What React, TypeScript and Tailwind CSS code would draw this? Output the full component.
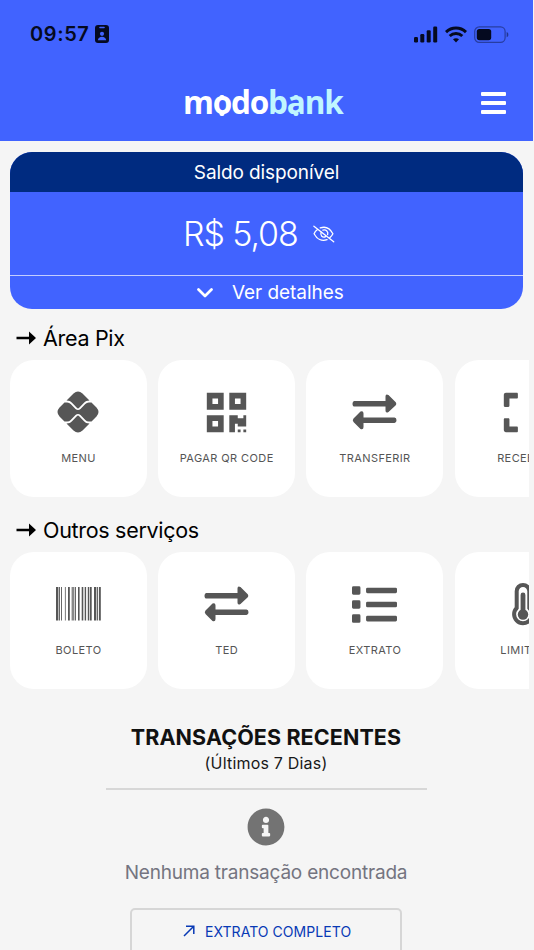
/** Mobile banking home screen. */

import type { ReactNode } from 'react';
import { FaExpand, FaInfoCircle, FaList, FaQrcode } from 'react-icons/fa';

function StatusBar() {
  return (
    <div className="flex h-[68px] items-center justify-between pr-[24px] pl-[30px]">
      <div className="flex items-center gap-[6px]">
        <span className="w-[59px] text-[20px] font-semibold tracking-[0.6px] whitespace-nowrap text-[#050a20]">09:57</span>
        <svg width="14" height="18" viewBox="0 0 14 18">
          <rect width="14" height="18" rx="3" fill="#050a20" />
          <rect x="4.2" y="1.8" width="5.6" height="1.5" rx=".7" fill="#4163ff" />
          <circle cx="7" cy="8.8" r="2.1" fill="#4163ff" />
          <path d="M2.8 15.2c.3-2.3 2-3.5 4.2-3.5s3.9 1.2 4.2 3.5z" fill="#4163ff" />
        </svg>
      </div>
      <div className="flex items-center gap-[7px]">
        <svg width="24" height="17" viewBox="0 0 24 17" fill="#050a20">
          <rect x="0" y="11" width="4" height="5.5" rx="1.2" />
          <rect x="6.3" y="8" width="4" height="8.5" rx="1.2" />
          <rect x="12.7" y="4.2" width="4" height="12.3" rx="1.2" />
          <rect x="19.2" y="0.5" width="4" height="16" rx="1.2" />
        </svg>
        <svg width="22" height="17" viewBox="0 0 22 17" fill="none" stroke="#050a20" strokeWidth="3">
          <path d="M1 6.1C6.7.7 15.3.7 21 6.1" />
          <path d="M4.7 10C8.3 6.7 13.7 6.7 17.3 10" />
          <path d="M11 16.5l-3-3.2c1.7-1.5 4.3-1.5 6 0z" fill="#050a20" stroke="none" />
        </svg>
        <svg width="35" height="17" viewBox="0 0 35 17">
          <rect x=".7" y=".9" width="30.4" height="15.4" rx="4.6" fill="none" stroke="#050a20" strokeOpacity=".42" strokeWidth="1.2" />
          <rect x="2.8" y="3" width="14.4" height="11.2" rx="2.6" fill="#050a20" />
          <path d="M32.7 6v5.3c2.2-.9 2.2-4.4 0-5.3z" fill="#050a20" fillOpacity=".5" />
        </svg>
      </div>
    </div>
  );
}

function LogoLetter({ children, nub }: { children: ReactNode; nub: string }) {
  return (
    <span className="relative">
      {children}
      <span className={`absolute top-[15px] left-1/2 h-[3px] w-[5px] -translate-x-1/2 rounded-t-[2px] ${nub}`} />
      <span className={`absolute bottom-[7px] left-1/2 h-[3px] w-[5px] -translate-x-1/2 rounded-b-[2px] ${nub}`} />
    </span>
  );
}

function Header() {
  return (
    <header className="mr-px h-[141px] bg-[#4163ff]">
      <StatusBar />
      <div className="flex h-[69px] items-center justify-between pr-[27px]">
        <div className="w-[45px]" />
        <div className="w-[160px] pb-[1px] font-['Open_Sans',sans-serif] text-[31.5px] leading-[44px] font-bold tracking-[-1.2px] whitespace-nowrap text-white">
          m<LogoLetter nub="bg-white">o</LogoLetter>do
          <span className="text-[#c0f6ff]">
            b<LogoLetter nub="bg-[#c0f6ff]">a</LogoLetter>nk
          </span>
        </div>
        <div className="flex w-[25px] flex-col gap-[5px]">
          <div className="h-[4px] rounded-[1px] bg-white" />
          <div className="h-[4px] rounded-[1px] bg-white" />
          <div className="h-[4px] rounded-[1px] bg-white" />
        </div>
      </div>
    </header>
  );
}

function BalanceCard() {
  return (
    <section className="mt-[11px] mr-[11px] ml-[10px] overflow-hidden rounded-[22px] bg-[#4163ff] text-white">
      <div className="flex h-[40px] items-center justify-center bg-[#002b80] pt-[2px] text-[19px] tracking-[-0.1px]">
        Saldo disponível
      </div>
      <div className="flex h-[83px] items-center pl-[173px]">
        <span className="w-[130px] text-[34px] font-light tracking-[-1.1px] whitespace-nowrap">R$ 5,08</span>
        <svg width="22" height="18" viewBox="0 0 22 18" fill="none" stroke="white" strokeWidth="1.3" strokeLinecap="round">
          <path d="M.9 1.2l19.8 15.6M7.2 2.9c5.3-1.8 10 .7 12.7 5.9-.7 1.4-1.7 2.7-2.9 3.7M4.2 4.7C2.8 5.7 1.8 7.1 1.1 8.8c2.7 5.3 7.7 7.7 13 5.8" />
          <path d="M8.2 7.1c-1.4 3.5 1.3 6 4.5 4.6M9.9 5.2c3.2-1 5.7 1.5 4.7 4.5" />
        </svg>
      </div>
      <div className="flex h-[34px] items-center border-t border-[#c3cdff] pl-[187px] text-[19px]">
        <svg width="16" height="10" viewBox="0 0 16 10" fill="none" stroke="white" strokeWidth="2.7" strokeLinecap="round" strokeLinejoin="round">
          <path d="M1.5 1.5L8 8l6.5-6.5" />
        </svg>
        <span className="ml-[19px] pt-[2px] tracking-[-0.06px]">Ver detalhes</span>
      </div>
    </section>
  );
}

function PixIcon() {
  return (
    <svg className="-ml-[2px]" width="42" height="42" viewBox="0 0 42 42" fill="#565656">
      <path d="M9.5 9.5L16.5 2.5Q21-1.5 25.5 2.5L32.5 9.5C29.8 9.6 28.5 10.2 27 11.7L22.2 16.8Q21 18 19.8 16.8L15 11.7C13.5 10.2 12.2 9.6 9.5 9.5Z" />
      <path d="M9.5 32.5L16.5 39.5Q21 43.5 25.5 39.5L32.5 32.5C29.8 32.4 28.5 31.8 27 30.3L22.2 25.2Q21 24 19.8 25.2L15 30.3C13.5 31.8 12.2 32.4 9.5 32.5Z" />
      <path d="M7.5 11.5H10.2Q12.2 11.5 13.7 13L18.5 18Q21 20.2 23.5 18L28.3 13Q29.8 11.5 31.8 11.5H34.5L39.5 16.5Q43.5 21 39.5 25.5L34.5 30.5H31.8Q29.8 30.5 28.3 29L23.5 24Q21 21.8 18.5 24L13.7 29Q12.2 30.5 10.2 30.5H7.5L2.5 25.5Q-1.5 21 2.5 16.5Z" />
    </svg>
  );
}

function TransferIcon() {
  return (
    <svg width="45" height="36" viewBox="0 0 45 36" fill="#565656">
      <path d="M2.5 7H33.5V2.5Q33.5-.5 36.5 1L43.5 8Q45 9.7 43.5 11.5L36.5 18Q33.5 19.5 33.5 16.5V12.5H2.5Q.5 12.5.5 9.7T2.5 7Z" />
      <path d="M42.5 23.5H11.5V19.5Q11.5 16.5 8.5 17.5L1.5 24.5Q0 26.3 1.5 28L8.5 35Q11.5 36 11.5 33V29H42.5Q44.5 29 44.5 26.3T42.5 23.5Z" />
    </svg>
  );
}

const bars = [
  [0, 2], [2.6, 1.3], [5.1, 0.9], [8.9, 0.8], [12, 1.8], [15.7, 1], [17.3, 1], [19, 0.9],
  [22, 1.6], [25.7, 1.6], [28.7, 1.4], [31.8, 1.5], [34, 1.7], [38, 2.1], [40.7, 1.2], [42.9, 1.9],
];

function BarcodeIcon() {
  return (
    <svg width="45" height="34" viewBox="0 0 45 34" fill="#565656">
      {bars.map(([x, width]) => (
        <rect key={x} x={x} y="0" width={width} height="33.5" />
      ))}
    </svg>
  );
}

function ThermometerIcon() {
  return (
    <svg width="22" height="44" viewBox="0 0 22 44" fill="none">
      <path d="M4.7 9.2a6.3 6.3 0 0 1 12.6 0v16.8a8.9 8.9 0 1 1-12.6 0z" stroke="#565656" strokeWidth="4" />
      <path d="M11 13v20" stroke="#565656" strokeWidth="4.8" strokeLinecap="round" />
      <circle cx="11" cy="32.5" r="5.2" fill="#565656" />
    </svg>
  );
}

function Tile({ icon, label }: { icon: ReactNode; label: string }) {
  return (
    <button className="flex h-[137px] w-[137px] shrink-0 flex-col items-center rounded-[24px] bg-white pt-[27px]">
      <span className="flex h-[50px] items-center text-[#565656]">{icon}</span>
      <span className="mt-[13px] text-[11px] leading-[17px] tracking-[0.4px] whitespace-nowrap text-[#555]">{label}</span>
    </button>
  );
}

function Section({ title, children }: { title: string; children: ReactNode }) {
  return (
    <section>
      <h2 className="flex h-[34px] items-center gap-[6px] pl-[16px] text-[21.5px] tracking-[-0.3px] text-black">
        <svg className="-mt-[2px]" width="21" height="16" viewBox="0 0 21 16">
          <path d="M.5 6.7H13V1.5L20 8l-7 6.5V9.2H.5z" fill="black" />
        </svg>
        <span className="-mt-[2px]">{title}</span>
      </h2>
      <div className="mt-[4px] mr-[5px] flex gap-[11.22px] overflow-hidden pl-[10px]">{children}</div>
    </section>
  );
}

function RecentTransactions() {
  return (
    <section className="mt-[34px] flex flex-col items-center pr-[2px]">
      <h2 className="text-[21.5px] leading-[28px] font-bold tracking-[0.1px] whitespace-nowrap text-[#111]">TRANSAÇÕES RECENTES</h2>
      <p className="text-[16px] leading-[24px] tracking-[0.2px] text-[#181818]">(Últimos 7 Dias)</p>
      <div className="mt-[13px] h-[2px] w-[321px] bg-[#d7d7d7]" />
      <FaInfoCircle className="mt-[18px] text-[#737373]" size={38} />
      <p className="mt-[13px] text-[19px] leading-[28px] tracking-[-0.2px] whitespace-nowrap text-[#747480]">Nenhuma transação encontrada</p>
      <button className="mt-[21px] flex h-[48px] w-[272px] shrink-0 items-center rounded-[5px] border-2 border-[#d6d6d6] pb-[2px] pl-[51px] text-[#0839b5]">
        <svg width="12" height="12" viewBox="0 0 12 12" fill="none" stroke="currentColor" strokeWidth="1.5">
          <path d="M1 11L10.5 1.5M3 1.2h7.8V9" />
        </svg>
        <span className="ml-[10px] text-[14px] tracking-[0.05px] whitespace-nowrap">EXTRATO COMPLETO</span>
      </button>
    </section>
  );
}

export default function App() {
  return (
    <main className="h-[950px] w-[534px] overflow-hidden bg-[#f5f5f5] font-['Inter',sans-serif]">
      <Header />
      <BalanceCard />
      <div className="mt-[13px] flex flex-col gap-[17px]">
        <Section title="Área Pix">
          <Tile icon={<PixIcon />} label="MENU" />
          <Tile icon={<FaQrcode size={45} />} label="PAGAR QR CODE" />
          <Tile icon={<TransferIcon />} label="TRANSFERIR" />
          <Tile icon={<FaExpand size={45} />} label="RECEBER" />
        </Section>
        <Section title="Outros serviços">
          <Tile icon={<BarcodeIcon />} label="BOLETO" />
          <Tile icon={<TransferIcon />} label="TED" />
          <Tile icon={<FaList size={45} />} label="EXTRATO" />
          <Tile icon={<ThermometerIcon />} label="LIMITES" />
        </Section>
      </div>
      <RecentTransactions />
    </main>
  );
}
